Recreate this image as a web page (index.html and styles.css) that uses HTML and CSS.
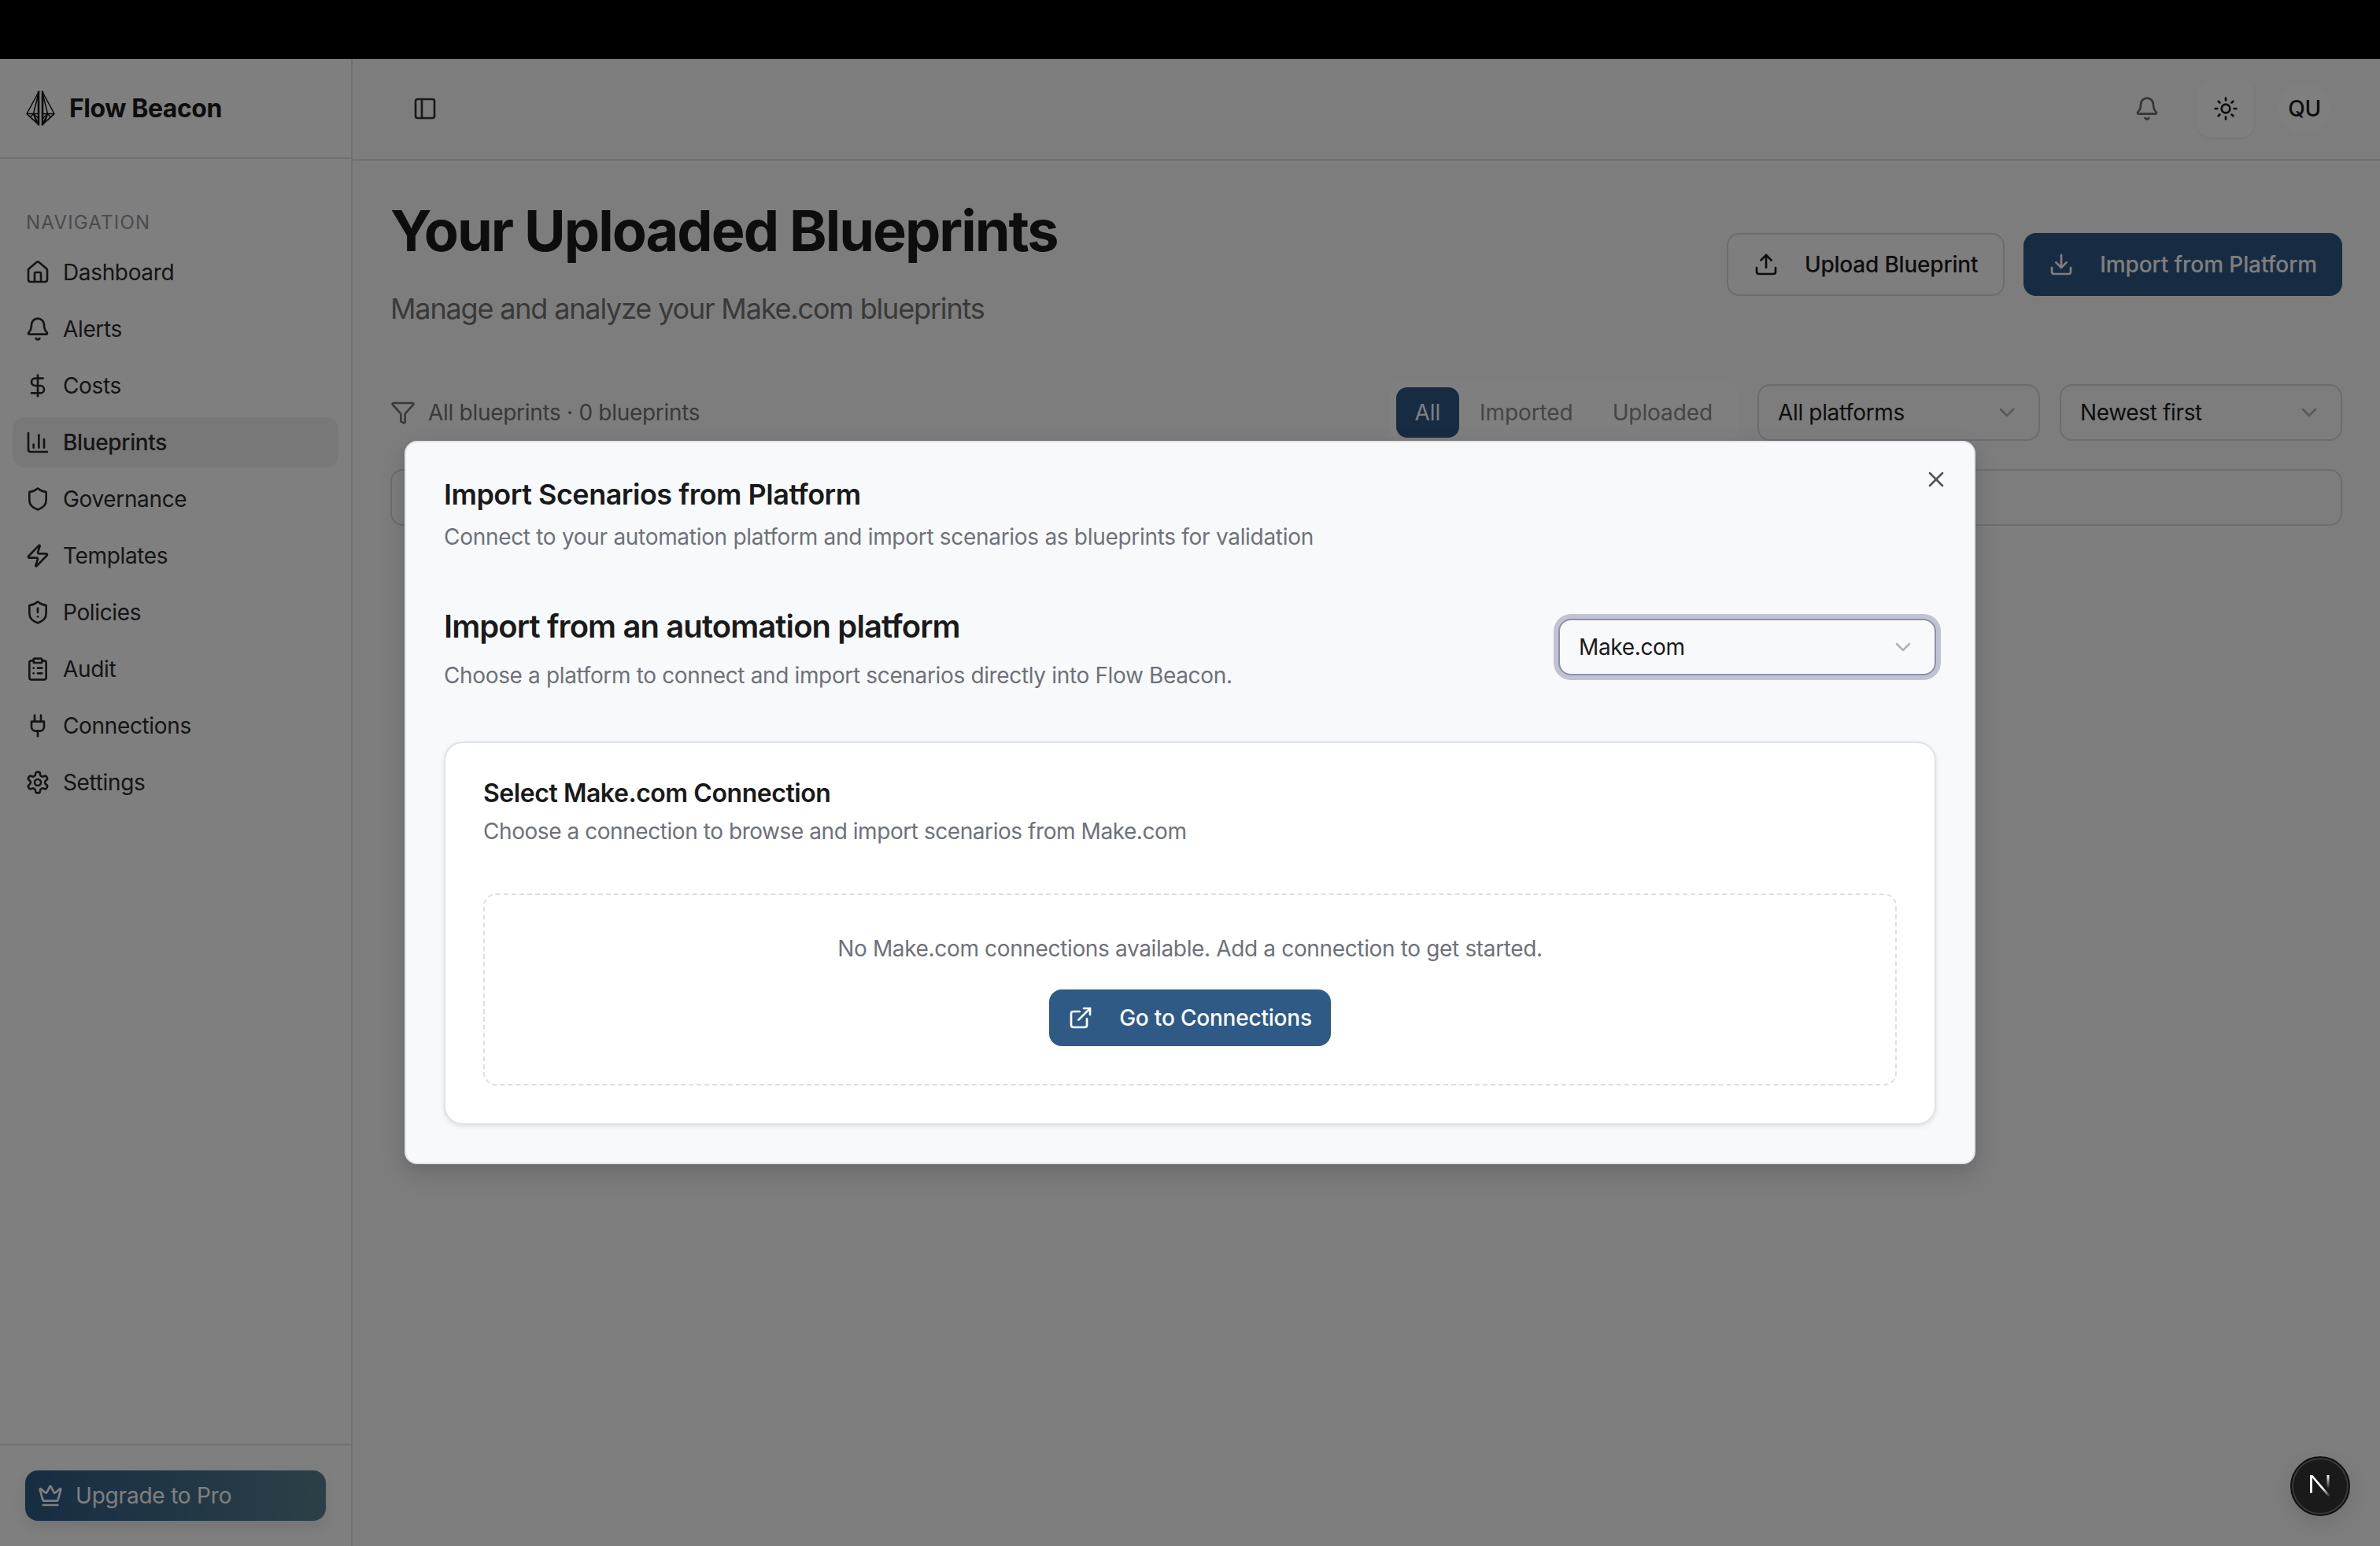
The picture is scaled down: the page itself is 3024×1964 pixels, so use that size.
FILE: index.html
```html
<!DOCTYPE html>
<html lang="en">

<head>
    <meta charset="UTF-8">
    <title>Flow Beacon</title>
    <link rel="stylesheet" href="styles.css">
</head>

<body>
    <svg class="sprite" xmlns="http://www.w3.org/2000/svg">
        <symbol id="i-house" viewBox="0 0 24 24"><path d="M15 21v-8a1 1 0 0 0-1-1h-4a1 1 0 0 0-1 1v8"/><path d="M3 10a2 2 0 0 1 .709-1.528l7-5.999a2 2 0 0 1 2.582 0l7 5.999A2 2 0 0 1 21 10v9a2 2 0 0 1-2 2H5a2 2 0 0 1-2-2z"/></symbol>
        <symbol id="i-bell" viewBox="0 0 24 24"><path d="M10.268 21a2 2 0 0 0 3.464 0"/><path d="M3.262 15.326A1 1 0 0 0 4 17h16a1 1 0 0 0 .74-1.673C19.41 13.956 18 12.499 18 8A6 6 0 0 0 6 8c0 4.499-1.411 5.956-2.738 7.326"/></symbol>
        <symbol id="i-dollar" viewBox="0 0 24 24"><path d="M12 2v20"/><path d="M17 5H9.5a3.5 3.5 0 0 0 0 7h5a3.5 3.5 0 0 1 0 7H6"/></symbol>
        <symbol id="i-chart" viewBox="0 0 24 24"><path d="M3 3v16a2 2 0 0 0 2 2h16"/><path d="M18 17V9"/><path d="M13 17V5"/><path d="M8 17v-3"/></symbol>
        <symbol id="i-shield" viewBox="0 0 24 24"><path d="M20 13c0 5-3.5 7.5-7.66 8.95a1 1 0 0 1-.67-.01C7.5 20.5 4 18 4 13V6a1 1 0 0 1 1-1c2 0 4.5-1.2 6.24-2.72a1.17 1.17 0 0 1 1.52 0C14.51 3.81 17 5 19 5a1 1 0 0 1 1 1z"/></symbol>
        <symbol id="i-zap" viewBox="0 0 24 24"><path d="M4 14a1 1 0 0 1-.78-1.63l9.9-10.2a.5.5 0 0 1 .86.46l-1.92 6.02A1 1 0 0 0 13 10h7a1 1 0 0 1 .78 1.63l-9.9 10.2a.5.5 0 0 1-.86-.46l1.92-6.02A1 1 0 0 0 11 14z"/></symbol>
        <symbol id="i-shield-alert" viewBox="0 0 24 24"><path d="M20 13c0 5-3.5 7.5-7.66 8.95a1 1 0 0 1-.67-.01C7.5 20.5 4 18 4 13V6a1 1 0 0 1 1-1c2 0 4.5-1.2 6.24-2.72a1.17 1.17 0 0 1 1.52 0C14.51 3.81 17 5 19 5a1 1 0 0 1 1 1z"/><path d="M12 8v4"/><path d="M12 16h.01"/></symbol>
        <symbol id="i-clipboard" viewBox="0 0 24 24"><rect x="8" y="2" width="8" height="4" rx="1"/><path d="M16 4h2a2 2 0 0 1 2 2v14a2 2 0 0 1-2 2H6a2 2 0 0 1-2-2V6a2 2 0 0 1 2-2h2"/><path d="M12 11h4"/><path d="M12 16h4"/><path d="M8 11h.01"/><path d="M8 16h.01"/></symbol>
        <symbol id="i-plug" viewBox="0 0 24 24"><path d="M12 22v-5"/><path d="M9 8V2"/><path d="M15 8V2"/><path d="M18 8v5a4 4 0 0 1-4 4h-4a4 4 0 0 1-4-4V8Z"/></symbol>
        <symbol id="i-settings" viewBox="0 0 24 24"><path d="M12.22 2h-.44a2 2 0 0 0-2 2v.18a2 2 0 0 1-1 1.73l-.43.25a2 2 0 0 1-2 0l-.15-.08a2 2 0 0 0-2.73.73l-.22.38a2 2 0 0 0 .73 2.73l.15.1a2 2 0 0 1 1 1.72v.51a2 2 0 0 1-1 1.74l-.15.09a2 2 0 0 0-.73 2.73l.22.38a2 2 0 0 0 2.73.73l.15-.08a2 2 0 0 1 2 0l.43.25a2 2 0 0 1 1 1.73V20a2 2 0 0 0 2 2h.44a2 2 0 0 0 2-2v-.18a2 2 0 0 1 1-1.73l.43-.25a2 2 0 0 1 2 0l.15.08a2 2 0 0 0 2.73-.73l.22-.39a2 2 0 0 0-.73-2.73l-.15-.08a2 2 0 0 1-1-1.74v-.5a2 2 0 0 1 1-1.74l.15-.09a2 2 0 0 0 .73-2.73l-.22-.38a2 2 0 0 0-2.73-.73l-.15.08a2 2 0 0 1-2 0l-.43-.25a2 2 0 0 1-1-1.73V4a2 2 0 0 0-2-2z"/><circle cx="12" cy="12" r="3"/></symbol>
        <symbol id="i-crown" viewBox="0 0 24 24"><path d="M11.562 3.266a.5.5 0 0 1 .876 0L15.39 8.87a1 1 0 0 0 1.516.294L21.183 5.5a.5.5 0 0 1 .798.519l-2.834 10.246a1 1 0 0 1-.956.734H5.81a1 1 0 0 1-.957-.734L2.02 6.02a.5.5 0 0 1 .798-.519l4.276 3.664a1 1 0 0 0 1.516-.294z"/><path d="M5 21h14"/></symbol>
        <symbol id="i-upload" viewBox="0 0 24 24"><path d="M21 15v4a2 2 0 0 1-2 2H5a2 2 0 0 1-2-2v-4"/><path d="M17 8l-5-5-5 5"/><path d="M12 3v12"/></symbol>
        <symbol id="i-download" viewBox="0 0 24 24"><path d="M21 15v4a2 2 0 0 1-2 2H5a2 2 0 0 1-2-2v-4"/><path d="M7 10l5 5 5-5"/><path d="M12 15V3"/></symbol>
        <symbol id="i-funnel" viewBox="0 0 24 24"><path d="M10 20a1 1 0 0 0 .553.895l2 1A1 1 0 0 0 14 21v-7a2 2 0 0 1 .517-1.341L21.74 4.67A1 1 0 0 0 21 3H3a1 1 0 0 0-.742 1.67l7.225 7.989A2 2 0 0 1 10 14z"/></symbol>
        <symbol id="i-sun" viewBox="0 0 24 24"><circle cx="12" cy="12" r="4"/><path d="M12 2v2"/><path d="M12 20v2"/><path d="m4.93 4.93 1.41 1.41"/><path d="m17.66 17.66 1.41 1.41"/><path d="M2 12h2"/><path d="M20 12h2"/><path d="m6.34 17.66-1.41 1.41"/><path d="m19.07 4.93-1.41 1.41"/></symbol>
        <symbol id="i-panel" viewBox="0 0 24 24"><rect x="3" y="3" width="18" height="18" rx="2"/><path d="M9 3v18"/></symbol>
        <symbol id="i-x" viewBox="0 0 24 24"><path d="M18 6 6 18"/><path d="m6 6 12 12"/></symbol>
        <symbol id="i-chevron" viewBox="0 0 24 24"><path d="m6 9 6 6 6-6"/></symbol>
        <symbol id="i-external" viewBox="0 0 24 24"><path d="M15 3h6v6"/><path d="M10 14 21 3"/><path d="M18 13v6a2 2 0 0 1-2 2H5a2 2 0 0 1-2-2V8a2 2 0 0 1 2-2h6"/></symbol>
    </svg>

    <div class="topbar"></div>

    <div class="app">
        <aside class="sidebar">
            <div class="brand">
                <svg class="logo" viewBox="0 0 37 45">
                    <g id="logo-half">
                        <path d="M16.5 1 1 29.5 16.5 44Z"/>
                        <path d="M16.5 1 9.5 29.5 16.5 44M1 29.5H16.5M1 29.5 9.5 37.5M5.5 34 9.5 29.5 13 40.5M9.5 29.5 16.5 36"/>
                        <path class="logo-core" d="M15.8 1V44"/>
                    </g>
                    <use href="#logo-half" transform="matrix(-1 0 0 1 37 0)"/>
                </svg>
                <span class="brand-name">Flow Beacon</span>
            </div>

            <nav class="nav">
                <div class="nav-label">NAVIGATION</div>
                <a class="nav-item"><svg class="icon"><use href="#i-house"/></svg>Dashboard</a>
                <a class="nav-item"><svg class="icon"><use href="#i-bell"/></svg>Alerts</a>
                <a class="nav-item"><svg class="icon"><use href="#i-dollar"/></svg>Costs</a>
                <a class="nav-item active"><svg class="icon"><use href="#i-chart"/></svg>Blueprints</a>
                <a class="nav-item"><svg class="icon"><use href="#i-shield"/></svg>Governance</a>
                <a class="nav-item"><svg class="icon"><use href="#i-zap"/></svg>Templates</a>
                <a class="nav-item"><svg class="icon"><use href="#i-shield-alert"/></svg>Policies</a>
                <a class="nav-item"><svg class="icon"><use href="#i-clipboard"/></svg>Audit</a>
                <a class="nav-item"><svg class="icon"><use href="#i-plug"/></svg>Connections</a>
                <a class="nav-item"><svg class="icon"><use href="#i-settings"/></svg>Settings</a>
            </nav>

            <div class="sidebar-foot">
                <button class="upgrade"><svg class="icon"><use href="#i-crown"/></svg>Upgrade to Pro</button>
            </div>
        </aside>

        <div class="main">
            <header class="header">
                <svg class="icon panel-toggle"><use href="#i-panel"/></svg>
                <div class="header-right">
                    <span class="head-btn bell"><svg class="icon"><use href="#i-bell"/></svg></span>
                    <span class="head-btn theme"><svg class="icon"><use href="#i-sun"/></svg></span>
                    <span class="avatar">QU</span>
                </div>
            </header>

            <section class="page">
                <div class="page-head">
                    <div>
                        <h1>Your Uploaded Blueprints</h1>
                        <p class="subtitle">Manage and analyze your Make.com blueprints</p>
                    </div>
                    <div class="actions">
                        <button class="btn outline"><svg class="icon"><use href="#i-upload"/></svg>Upload Blueprint</button>
                        <button class="btn primary"><svg class="icon"><use href="#i-download"/></svg>Import from Platform</button>
                    </div>
                </div>

                <div class="filters">
                    <div class="count"><svg class="icon"><use href="#i-funnel"/></svg>All blueprints · 0 blueprints</div>
                    <div class="segment">
                        <span class="seg on">All</span>
                        <span class="seg">Imported</span>
                        <span class="seg">Uploaded</span>
                    </div>
                    <div class="select">All platforms<svg class="icon"><use href="#i-chevron"/></svg></div>
                    <div class="select">Newest first<svg class="icon"><use href="#i-chevron"/></svg></div>
                </div>

                <div class="search"></div>
            </section>
        </div>

        <div class="overlay">
            <div class="modal">
                <svg class="icon close"><use href="#i-x"/></svg>
                <h2 class="modal-title">Import Scenarios from Platform</h2>
                <p class="modal-desc">Connect to your automation platform and import scenarios as blueprints for validation</p>

                <div class="platform-row">
                    <div>
                        <h3>Import from an automation platform</h3>
                        <p class="platform-desc">Choose a platform to connect and import scenarios directly into Flow Beacon.</p>
                    </div>
                    <div class="select focus">Make.com<svg class="icon"><use href="#i-chevron"/></svg></div>
                </div>

                <div class="card">
                    <h4>Select Make.com Connection</h4>
                    <p class="card-desc">Choose a connection to browse and import scenarios from Make.com</p>
                    <div class="empty">
                        <p>No Make.com connections available. Add a connection to get started.</p>
                        <button class="btn go"><svg class="icon"><use href="#i-external"/></svg>Go to Connections</button>
                    </div>
                </div>
            </div>
        </div>
    </div>

    <div class="dev-badge">
        <svg viewBox="0 0 26 28" width="26" height="28">
            <defs>
                <linearGradient id="n-a" gradientUnits="userSpaceOnUse" x1="6" y1="6" x2="25" y2="28"><stop offset="0.5" stop-color="#fff"/><stop offset="1" stop-color="#fff" stop-opacity="0"/></linearGradient>
                <linearGradient id="n-b" x1="0" y1="0" x2="0" y2="1"><stop offset="0" stop-color="#fff"/><stop offset="1" stop-color="#fff" stop-opacity="0"/></linearGradient>
            </defs>
            <rect x="0" y="0" width="3" height="22.5" fill="#fff"/>
            <path d="M0 0H3.4L25.5 25.8 23.5 27.6Z" fill="url(#n-a)"/>
            <rect x="21.5" y="0" width="3" height="17" fill="url(#n-b)"/>
        </svg>
    </div>
</body>

</html>
```

FILE: styles.css
```css
* {
    box-sizing: border-box;
}

html,
body {
    height: 100%;
}

body {
    margin: 0;
    display: flex;
    flex-flow: column;
    background-color: #000;
    color: #1a1a1a;
    font-family: Inter, "Noto Sans", sans-serif;
    font-size: 28px;
    letter-spacing: -0.35px;
    overflow: hidden;
}

h1, h2, h3, h4, p {
    margin: 0;
}

button {
    font-family: inherit;
    font-size: 28px;
    letter-spacing: -0.2px;
    border: none;
}

.sprite {
    display: none;
}

.icon {
    width: 32px;
    height: 32px;
    flex: none;
    fill: none;
    stroke: currentColor;
    stroke-width: 2;
    stroke-linecap: round;
    stroke-linejoin: round;
}

.topbar {
    height: 75px;
    flex: none;
    background-color: #000;
}

.app {
    flex: 1;
    display: flex;
    position: relative;
    min-height: 0;
    background-color: #fbfbfb;
}

/* sidebar */

.sidebar {
    width: 448px;
    flex: none;
    display: flex;
    flex-flow: column;
    background-color: #fff;
    border-right: 2px solid #dedee8;
}

.brand {
    height: 127px;
    flex: none;
    display: flex;
    align-items: center;
    gap: 18px;
    padding-left: 33px;
    border-bottom: 2px solid #dedee8;
}

.logo {
    width: 37px;
    height: 45px;
    fill: none;
    stroke: #111;
    stroke-width: 1.5;
    stroke-linejoin: round;
}

.logo-core {
    stroke-width: 2.2;
}

.brand-name {
    font-size: 32px;
    font-weight: 700;
    letter-spacing: -0.45px;
}

.nav {
    flex: 1;
    display: flex;
    flex-flow: column;
    gap: 8px;
    padding: 65px 16px 0;
}

.nav-label {
    height: 32px;
    line-height: 32px;
    margin-bottom: 7px;
    padding-left: 17px;
    font-size: 24px;
    letter-spacing: 1.2px;
    color: #94949e;
}

.nav-item {
    height: 64px;
    display: flex;
    align-items: center;
    gap: 16px;
    padding-left: 16px;
    border-radius: 16px;
    color: #2b2b2b;
}

.nav-item.active {
    background-color: #f0f0f0;
    font-weight: 500;
}

.sidebar-foot {
    flex: none;
    padding: 32px;
    border-top: 2px solid #dedee8;
}

.upgrade {
    width: 100%;
    height: 64px;
    display: flex;
    align-items: center;
    gap: 16px;
    padding: 0 16px;
    border-radius: 16px;
    color: #fff;
    background: linear-gradient(90deg, #2f5a85, #58808f);
    box-shadow: 0 8px 20px rgba(0, 0, 0, 0.1);
}

/* header and page */

.main {
    flex: 1;
    min-width: 0;
    display: flex;
    flex-flow: column;
}

.header {
    height: 129px;
    flex: none;
    display: flex;
    align-items: center;
    justify-content: space-between;
    padding: 0 64px 2px 76px;
    border-bottom: 2px solid #dedee8;
}

.panel-toggle {
    color: #333;
}

.header-right {
    display: flex;
    align-items: center;
    gap: 28px;
}

.head-btn {
    width: 72px;
    height: 72px;
    display: flex;
    align-items: center;
    justify-content: center;
    border-radius: 16px;
}

.bell {
    color: #6b6b6b;
}

.theme {
    background-color: #fff;
    box-shadow: 0 2px 4px rgba(0, 0, 0, 0.06);
}

.avatar {
    width: 64px;
    height: 64px;
    margin-left: 4px;
    display: flex;
    align-items: center;
    justify-content: center;
    border-radius: 50%;
    background-color: #fff;
    font-weight: 500;
}

.page {
    padding: 49px 48px 0;
}

.page-head {
    display: flex;
    justify-content: space-between;
    align-items: flex-start;
}

h1 {
    font-size: 72px;
    line-height: 80px;
    font-weight: 700;
    letter-spacing: -2px;
}

.subtitle {
    margin-top: 39px;
    font-size: 36px;
    line-height: 40px;
    letter-spacing: -1.17px;
    color: #737373;
}

.actions {
    display: flex;
    gap: 24px;
    margin-top: 43px;
}

.btn {
    height: 80px;
    display: flex;
    align-items: center;
    gap: 33px;
    padding: 0 32px;
    border-radius: 16px;
    font-weight: 500;
}

.btn.outline {
    background-color: #fcfcfc;
    border: 2px solid #d8d8e4;
    color: #1a1a1a;
}

.btn.primary {
    background-color: #2e5884;
    color: #fff;
    letter-spacing: -0.1px;
}

.filters {
    display: flex;
    align-items: center;
    gap: 25px;
    margin-top: 72px;
}

.count {
    flex: 1;
    display: flex;
    align-items: center;
    gap: 16px;
    letter-spacing: -0.3px;
    color: #737373;
}

.segment {
    display: flex;
    gap: 2px;
    padding: 8px;
    border-radius: 16px;
    background-color: #fff;
    letter-spacing: -0.1px;
}

.seg {
    height: 64px;
    display: flex;
    align-items: center;
    padding: 0 24px;
    border-radius: 14px;
    color: #8a8a8a;
}

.seg.on {
    background-color: #2e5884;
    color: #fff;
}

.select {
    width: 359px;
    height: 72px;
    display: flex;
    align-items: center;
    justify-content: space-between;
    padding: 0 24px;
    border: 2px solid #d8d8e4;
    border-radius: 16px;
}

.select .icon {
    color: #b3b3b3;
}

.search {
    height: 72px;
    margin-top: 32px;
    border: 2px solid #d8d8e4;
    border-radius: 16px;
}

/* modal */

.overlay {
    position: absolute;
    top: 0;
    right: 0;
    bottom: 0;
    left: 0;
    display: flex;
    align-items: center;
    justify-content: center;
    background-color: rgba(0, 0, 0, 0.5);
}

.modal {
    width: 1996px;
    position: relative;
    padding: 48px;
    background-color: #f8f9fb;
    border: 2px solid #e2e4ea;
    border-radius: 16px;
    box-shadow: 0 12px 32px rgba(0, 0, 0, 0.14), 0 4px 12px rgba(0, 0, 0, 0.05);
}

.close {
    position: absolute;
    top: 31px;
    right: 32px;
    color: #555;
}

.modal-title {
    font-size: 36px;
    line-height: 36px;
    font-weight: 600;
    letter-spacing: -0.5px;
}

.modal-desc {
    margin-top: 16px;
    line-height: 40px;
    letter-spacing: -0.3px;
    color: #6e717a;
}

.platform-row {
    display: flex;
    justify-content: space-between;
    align-items: flex-start;
    margin-top: 70px;
}

h3 {
    font-size: 40px;
    line-height: 48px;
    font-weight: 600;
    letter-spacing: -0.9px;
}

.platform-desc {
    margin-top: 18px;
    line-height: 40px;
    color: #6e717a;
}

.select.focus {
    width: 480px;
    margin-top: 14px;
    background-color: #f8f9fb;
    border-color: #8a90ad;
    box-shadow: 0 0 0 6px #c0c4d2;
}

.card {
    margin-top: 64px;
    padding: 48px;
    background-color: #fff;
    border: 2px solid #e0e2e8;
    border-radius: 24px;
    box-shadow: 0 2px 6px rgba(0, 0, 0, 0.1);
}

h4 {
    font-size: 32px;
    line-height: 32px;
    font-weight: 600;
    letter-spacing: -0.45px;
}

.card-desc {
    margin-top: 12px;
    line-height: 40px;
    letter-spacing: -0.44px;
    color: #6e717a;
}

.empty {
    display: flex;
    flex-flow: column;
    align-items: center;
    gap: 32px;
    margin-top: 59px;
    padding: 48px;
    border: 2px dashed #dcdfe5;
    border-radius: 16px;
    color: #6e717a;
}

.empty p {
    line-height: 40px;
}

.btn.go {
    height: 72px;
    gap: 33px;
    padding: 0 24px;
    background-color: #2f5a85;
    color: #fff;
}

/* dev indicator, sits over the dimmed page */

.dev-badge {
    position: fixed;
    right: 38px;
    bottom: 38px;
    width: 76px;
    height: 76px;
    display: flex;
    align-items: center;
    justify-content: center;
    border-radius: 50%;
    background-color: #1a1a1a;
    border: 2px solid #111;
    box-shadow: inset 0 0 0 2px #3a3a3a, 0 8px 24px rgba(0, 0, 0, 0.1);
}
```
